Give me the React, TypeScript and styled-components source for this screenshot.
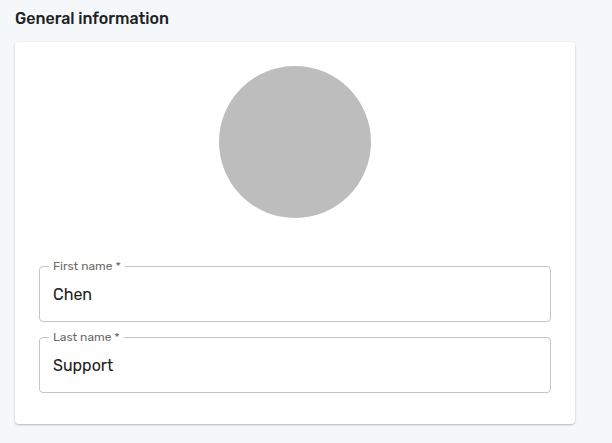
import styled, { createGlobalStyle } from 'styled-components';

const GlobalStyle = createGlobalStyle`
  html, body {
    margin: 0;
    padding: 0;
    background: #f5f8fb;
    font-family: Rubik, Inter, "Noto Sans", sans-serif;
  }
`;

const colors = {
  page: '#f5f8fb',
  text: '#212121',
  label: '#6b6b6b',
  border: '#c4c4c4',
  avatar: '#bdbdbd',
};

type FieldProps = {
  label: string;
  value: string;
};

const TextField = ({ label, value }: FieldProps) => (
  <FieldBox>
    <FieldLabel>{label} *</FieldLabel>
    <FieldValue>{value}</FieldValue>
  </FieldBox>
);

export default function App() {
  return (
    <>
      <GlobalStyle />
      <Page>
        <Title>General information</Title>
        <Card>
          <AvatarRow>
            <Avatar />
          </AvatarRow>
          <Fields>
            <TextField label="First name" value="Chen" />
            <TextField label="Last name" value="Support" />
          </Fields>
        </Card>
      </Page>
    </>
  );
}

const Page = styled.div`
  width: 560px;
  padding: 10px 15px 20px;
`;

const Title = styled.h2`
  margin: 0 0 14px;
  font-size: 16px;
  line-height: 18px;
  font-weight: 500;
  color: ${colors.text};
`;

const Card = styled.div`
  background: #fff;
  border-radius: 4px;
  padding: 24px 24px 31px;
  box-shadow: 0 1px 2px rgba(0, 0, 0, 0.25), 0 0 1px rgba(0, 0, 0, 0.08);
`;

const AvatarRow = styled.div`
  display: flex;
  justify-content: center;
  margin-bottom: 48px;
`;

const Avatar = styled.div`
  width: 152px;
  height: 152px;
  border-radius: 50%;
  background: ${colors.avatar};
`;

const Fields = styled.div`
  display: flex;
  flex-direction: column;
  gap: 15px;
`;

const FieldBox = styled.div`
  position: relative;
  height: 56px;
  box-sizing: border-box;
  border: 1px solid ${colors.border};
  border-radius: 4px;
  padding: 1px 13px 0;
  display: flex;
  align-items: center;
`;

const FieldLabel = styled.span`
  position: absolute;
  left: 9px;
  top: -7px;
  padding: 0 4px;
  background: #fff;
  font-size: 12px;
  line-height: 12px;
  color: ${colors.label};
`;

const FieldValue = styled.div`
  font-size: 16px;
  line-height: 20px;
  color: ${colors.text};
`;
